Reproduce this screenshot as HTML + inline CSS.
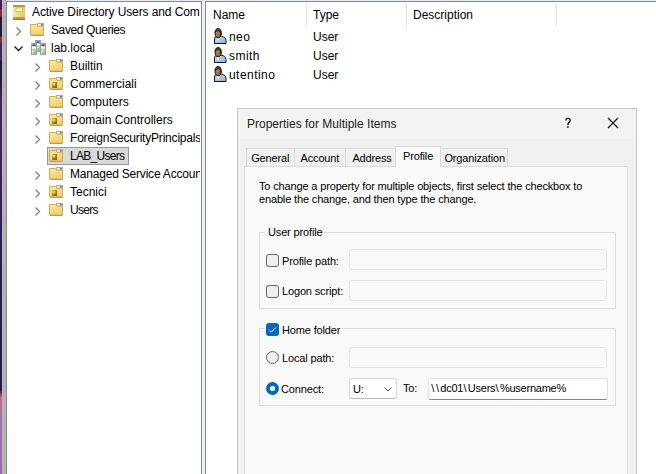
<!DOCTYPE html>
<html><head><meta charset="utf-8">
<style>
*{margin:0;padding:0;box-sizing:border-box}
html,body{width:656px;height:474px;overflow:hidden;background:#fff;position:relative;font-family:"Liberation Sans",sans-serif;color:#000}
.a{position:absolute}
.t{position:absolute;white-space:nowrap;font-size:12px;line-height:12px}
.s{position:absolute;white-space:nowrap;font-size:11px;line-height:11px;letter-spacing:-0.15px}
svg{position:absolute;overflow:visible}
</style></head><body>
<svg width="0" height="0" style="position:absolute">
<defs>
<linearGradient id="fg" x1="0" y1="0" x2="0.3" y2="1"><stop offset="0" stop-color="#fbe8a6"/><stop offset="1" stop-color="#f3d06e"/></linearGradient>
<linearGradient id="oug" x1="0" y1="0" x2="1" y2="1"><stop offset="0" stop-color="#d8c070"/><stop offset="0.5" stop-color="#a08018"/><stop offset="1" stop-color="#7a5e08"/></linearGradient>
<symbol id="fold" viewBox="0 0 16 16">
<path d="M0.5 2.5h6l1.5 1.5h5.5v9h-13z" fill="url(#fg)" stroke="#d0ab58"/>
<rect x="7.5" y="1.5" width="6" height="2.5" fill="#f6e4a8" stroke="#d0ab58"/>
<rect x="8.5" y="2" width="2.5" height="1.5" fill="#fff"/>
<rect x="10.8" y="2" width="2" height="1.5" fill="#3a7ee0"/>
<path d="M1 13.5h12.5" stroke="#c09a48"/>
</symbol>
<symbol id="ou" viewBox="0 0 16 16">
<use href="#fold"/>
<rect x="3" y="6" width="5" height="6" fill="url(#oug)"/>
<rect x="3.8" y="7" width="2.5" height="2.5" fill="#f0e4a0" opacity="0.8"/>
</symbol>
<symbol id="chev" viewBox="0 0 8 10">
<path d="M1.5 1.5l4 4l-4 4" fill="none" stroke="#808080" stroke-width="1.25"/>
</symbol>
<symbol id="user" viewBox="0 0 14 17">
<linearGradient id="ug" x1="0" y1="0" x2="1" y2="1"><stop offset="0" stop-color="#c8dcf4"/><stop offset="1" stop-color="#8cb2e0"/></linearGradient>
<linearGradient id="fcg" x1="0" y1="0" x2="1" y2="1"><stop offset="0" stop-color="#d09a68"/><stop offset="1" stop-color="#8a5020"/></linearGradient>
<path d="M1.5 15.5V11c0-1.6 1-2.6 2.5-2.6h4.5c2.6 0 4.5 1.6 4.5 4.2v2.9z" fill="url(#ug)" stroke="#111"/>
<path d="M3.6 9l1.6 4.8l1.4-4.8z" fill="#fff"/>
<ellipse cx="5.1" cy="5.3" rx="3.0" ry="4.5" fill="url(#fcg)" stroke="#111"/>
<path d="M2.1 4.4C2.1 1.6 3.4 0.7 5.1 0.7S8.1 1.6 8.1 4.4L8.1 7.2C7.8 5.2 7.6 3.3 6.2 2.9C4.9 2.6 3.2 3 2.2 4.6z" fill="#4a4a4a" stroke="#111" stroke-width="0.7"/>
</symbol>
</defs>
</svg>

<!-- window chrome -->
<div class="a" style="left:0;top:0;width:2px;height:474px;background:linear-gradient(#4a1a60 0,#4a1a60 9px,#8a2a40 10px,#8a2a40 16px,#1e1a3e 17px,#1e1a3e 36px,#8a2a40 37px,#8a2a40 42px,#4a1e62 43px,#4a1e62 60px,#1c1838 61px,#1c1838 80px,#4a2060 100px,#3a1e5a 200px,#2a1e4a 240px,#221c44 390px,#c86a8a 398px,#a070a8 420px,#9a6aa8 474px)"></div>
<div class="a" style="left:2px;top:0;width:4px;height:474px;background:#b2b2b2"></div>
<div class="a" style="left:2px;top:0;width:1px;height:474px;background:#bababa"></div>
<div class="a" style="left:6px;top:0;width:650px;height:1px;background:#dfeaf8"></div>
<div class="a" style="left:6px;top:1px;width:650px;height:1px;background:#858a93"></div>
<div class="a" style="left:6px;top:1px;width:1px;height:473px;background:#858a93"></div>
<div class="a" style="left:201px;top:1px;width:1px;height:473px;background:#858a93"></div>
<div class="a" style="left:202px;top:1px;width:3px;height:473px;background:#f0f0f0"></div>
<div class="a" style="left:205px;top:1px;width:1px;height:473px;background:#858a93"></div>

<!-- tree pane -->
<div class="a" style="left:7px;top:0px;width:193px;height:474px;overflow:hidden">
<svg style="left:6px;top:5px" width="12" height="15" viewBox="0 0 12 15"><defs><linearGradient id="bk" x1="0" x2="1"><stop offset="0" stop-color="#f6e9a8"/><stop offset="1" stop-color="#e6c860"/></linearGradient></defs><rect x="0" y="0" width="12" height="15" fill="url(#bk)"/><rect x="0" y="0" width="12" height="2" fill="#b89838"/><rect x="0" y="12" width="12" height="3" fill="#b8a050"/><rect x="0" y="14" width="12" height="1" fill="#9a7a20"/><rect x="3" y="3" width="6.5" height="3.5" fill="#fffbe0" stroke="#d8bc60"/></svg>
<div class="t" style="left:25px;top:6px;letter-spacing:-0.1px">Active Directory Users and Computers [dc01.lab.local]</div>
<svg style="left:7.5px;top:26px" width="8" height="10" viewBox="0 0 8 10"><use href="#chev"/></svg>
<svg style="left:23px;top:22px" width="16" height="16" viewBox="0 0 16 16"><use href="#fold"/></svg>
<div class="t" style="left:44px;top:24px;letter-spacing:-0.4px">Saved Queries</div>
<svg style="left:6px;top:45px" width="10" height="8" viewBox="0 0 10 8"><path d="M1.5 1.5l4 4l4-4" fill="none" stroke="#1a1a1a" stroke-width="1.3"/></svg>
<svg style="left:24px;top:40px" width="16" height="16" viewBox="0 0 16 16"><defs><linearGradient id="svg_g" x1="0" x2="1"><stop offset="0" stop-color="#e4e7ea"/><stop offset="1" stop-color="#bcc2c8"/></linearGradient><linearGradient id="led" x1="0" y1="0" x2="1" y2="1"><stop offset="0" stop-color="#c8f040"/><stop offset="1" stop-color="#18c020"/></linearGradient></defs><rect x="4.5" y="0.5" width="5" height="11" fill="url(#svg_g)" stroke="#98a0a8"/><rect x="5.2" y="1.4" width="3.6" height="1.4" rx="0.6" fill="#1e3444"/><rect x="5" y="4" width="4" height="1.6" fill="#f6f8fa"/><rect x="5" y="6.2" width="4" height="0.8" fill="#b8bec6"/><rect x="6.3" y="8.3" width="2.2" height="2.2" fill="url(#led)"/><rect x="0.5" y="3.5" width="5" height="11" fill="url(#svg_g)" stroke="#98a0a8"/><rect x="1.2" y="4.4" width="3.6" height="1.4" rx="0.6" fill="#1e3444"/><rect x="1" y="7" width="4" height="1.6" fill="#f6f8fa"/><rect x="1" y="9.2" width="4" height="0.8" fill="#b8bec6"/><rect x="2.3" y="11.3" width="2.2" height="2.2" fill="url(#led)"/><rect x="9.5" y="3.5" width="5" height="11" fill="url(#svg_g)" stroke="#98a0a8"/><rect x="10.2" y="4.4" width="3.6" height="1.4" rx="0.6" fill="#1e3444"/><rect x="10" y="7" width="4" height="1.6" fill="#f6f8fa"/><rect x="10" y="9.2" width="4" height="0.8" fill="#b8bec6"/><rect x="11.3" y="11.3" width="2.2" height="2.2" fill="url(#led)"/></svg>
<div class="t" style="left:44px;top:42px">lab.local</div>
<svg style="left:27px;top:62px" width="8" height="10" viewBox="0 0 8 10"><use href="#chev"/></svg>
<svg style="left:42px;top:58px" width="16" height="16" viewBox="0 0 16 16"><use href="#fold"/></svg>
<div class="t" style="left:63px;top:60px">Builtin</div>
<svg style="left:27px;top:80px" width="8" height="10" viewBox="0 0 8 10"><use href="#chev"/></svg>
<svg style="left:42px;top:76px" width="16" height="16" viewBox="0 0 16 16"><use href="#ou"/></svg>
<div class="t" style="left:63px;top:78px">Commerciali</div>
<svg style="left:27px;top:98px" width="8" height="10" viewBox="0 0 8 10"><use href="#chev"/></svg>
<svg style="left:42px;top:94px" width="16" height="16" viewBox="0 0 16 16"><use href="#fold"/></svg>
<div class="t" style="left:63px;top:96px">Computers</div>
<svg style="left:27px;top:116px" width="8" height="10" viewBox="0 0 8 10"><use href="#chev"/></svg>
<svg style="left:42px;top:112px" width="16" height="16" viewBox="0 0 16 16"><use href="#ou"/></svg>
<div class="t" style="left:63px;top:114px">Domain Controllers</div>
<svg style="left:27px;top:134px" width="8" height="10" viewBox="0 0 8 10"><use href="#chev"/></svg>
<svg style="left:42px;top:130px" width="16" height="16" viewBox="0 0 16 16"><use href="#fold"/></svg>
<div class="t" style="left:63px;top:132px;letter-spacing:-0.2px">ForeignSecurityPrincipals</div>
<div class="a" style="left:40px;top:147px;width:82px;height:18px;background:#d9d9d9;border:1px solid #999"></div>
<svg style="left:42px;top:148px" width="16" height="16" viewBox="0 0 16 16"><use href="#ou"/></svg>
<div class="t" style="left:63px;top:150px;letter-spacing:-0.7px">LAB_Users</div>
<svg style="left:27px;top:170px" width="8" height="10" viewBox="0 0 8 10"><use href="#chev"/></svg>
<svg style="left:42px;top:166px" width="16" height="16" viewBox="0 0 16 16"><use href="#fold"/></svg>
<div class="t" style="left:63px;top:168px;letter-spacing:-0.2px">Managed Service Accounts</div>
<svg style="left:27px;top:188px" width="8" height="10" viewBox="0 0 8 10"><use href="#chev"/></svg>
<svg style="left:42px;top:184px" width="16" height="16" viewBox="0 0 16 16"><use href="#ou"/></svg>
<div class="t" style="left:63px;top:186px">Tecnici</div>
<svg style="left:27px;top:206px" width="8" height="10" viewBox="0 0 8 10"><use href="#chev"/></svg>
<svg style="left:42px;top:202px" width="16" height="16" viewBox="0 0 16 16"><use href="#fold"/></svg>
<div class="t" style="left:63px;top:204px;letter-spacing:-0.7px">Users</div>
</div>

<!-- list pane -->
<div class="a" style="left:206px;top:2px;width:450px;height:472px;overflow:hidden">
<div class="t" style="left:7px;top:7px">Name</div>
<div class="t" style="left:107px;top:7px">Type</div>
<div class="t" style="left:207px;top:7px">Description</div>
<div class="a" style="left:100px;top:1px;width:1px;height:24px;background:#e5e5e5"></div>
<div class="a" style="left:200px;top:1px;width:1px;height:24px;background:#e5e5e5"></div>
<div class="a" style="left:350px;top:1px;width:1px;height:24px;background:#e5e5e5"></div>
<svg style="left:7px;top:26px" width="14" height="17" viewBox="0 0 14 17"><use href="#user"/></svg>
<div class="t" style="left:23px;top:29px;letter-spacing:0.45px">neo</div>
<div class="t" style="left:107px;top:29px">User</div>
<svg style="left:7px;top:45px" width="14" height="17" viewBox="0 0 14 17"><use href="#user"/></svg>
<div class="t" style="left:23px;top:48px;letter-spacing:0.45px">smith</div>
<div class="t" style="left:107px;top:48px">User</div>
<svg style="left:7px;top:64px" width="14" height="17" viewBox="0 0 14 17"><use href="#user"/></svg>
<div class="t" style="left:23px;top:67px;letter-spacing:0.45px">utentino</div>
<div class="t" style="left:107px;top:67px">User</div>
</div>

<!-- dialog -->
<div class="a" style="left:237px;top:108px;width:400px;height:366px;background:#f0f0f0;border:1px solid #c4c4c4;border-bottom:none">
<div class="a" style="left:0;top:0;width:398px;height:30px;background:#f3f3f3"></div>
<div class="a" style="left:0;top:0;width:1px;height:366px;background:#f6f6f6"></div>
<div class="t" style="left:9px;top:9px;color:#1a1a1a">Properties for Multiple Items</div>
<svg style="left:326px;top:8px" width="8" height="12" viewBox="0 0 8 12"><path d="M1.9 3.4C1.9 2 2.8 1.3 4 1.3S6.2 2 6.2 3.3C6.2 4.6 5.2 5 4.5 5.8C4 6.3 3.9 6.8 3.9 8.2" fill="none" stroke="#111" stroke-width="1.35"/><circle cx="3.9" cy="10.1" r="0.9" fill="#111"/></svg>
<svg style="left:369px;top:8px" width="12" height="12" viewBox="0 0 12 12"><path d="M1 1L11 11M11 1L1 11" stroke="#111" stroke-width="1.2"/></svg>
<div class="a" style="left:8px;top:39px;width:49px;height:19px;background:#f0f0f0;border:1px solid #d9d9d9;border-bottom:none"></div>
<div class="a" style="left:56px;top:39px;width:52px;height:19px;background:#f0f0f0;border:1px solid #d9d9d9;border-bottom:none"></div>
<div class="a" style="left:107px;top:39px;width:51px;height:19px;background:#f0f0f0;border:1px solid #d9d9d9;border-bottom:none"></div>
<div class="a" style="left:202px;top:39px;width:68px;height:19px;background:#f0f0f0;border:1px solid #d9d9d9;border-bottom:none"></div>
<div class="s" style="left:13.2px;top:44px">General</div>
<div class="s" style="left:62.5px;top:44px">Account</div>
<div class="s" style="left:114.4px;top:44px">Address</div>
<div class="s" style="left:206.4px;top:44px">Organization</div>
<div class="a" style="left:6px;top:57px;width:384px;height:320px;background:#f9f9f9;border:1px solid #dcdcdc"></div>
<div class="a" style="left:390px;top:58px;width:1px;height:320px;background:#f5f5f5"></div>
<div class="a" style="left:397px;top:0px;width:1px;height:366px;background:#f5f5f5"></div>
<div class="a" style="left:157px;top:37px;width:46px;height:21px;background:#f9f9f9;border:1px solid #d9d9d9;border-bottom:none"></div>
<div class="s" style="left:165px;top:42px">Profile</div>
<div class="s" style="left:21px;top:72px">To change a property for multiple objects, first select the checkbox to</div>
<div class="s" style="left:21px;top:85px">enable the change, and then type the change.</div>
<div class="a" style="left:21px;top:123px;width:357px;height:77px;border:1px solid #dcdcdc"></div>
<div class="a" style="left:27px;top:117px;width:58px;height:12px;background:#f9f9f9"></div>
<div class="s" style="left:30px;top:118px">User profile</div>
<svg style="left:28px;top:145px" width="13" height="13" viewBox="0 0 13 13"><rect x="0.5" y="0.5" width="12" height="12" rx="2.5" fill="#f0f0f0" stroke="#666"/></svg>
<div class="s" style="left:44px;top:147px">Profile path:</div>
<div class="a" style="left:111px;top:140px;width:258px;height:21px;background:#f9f9f9;border:1px solid #e6e6e6;border-radius:3px"></div>
<svg style="left:28px;top:176px" width="13" height="13" viewBox="0 0 13 13"><rect x="0.5" y="0.5" width="12" height="12" rx="2.5" fill="#f0f0f0" stroke="#666"/></svg>
<div class="s" style="left:44px;top:177px">Logon script:</div>
<div class="a" style="left:111px;top:171px;width:258px;height:21px;background:#f9f9f9;border:1px solid #e6e6e6;border-radius:3px"></div>
<div class="a" style="left:21px;top:219px;width:357px;height:78px;border:1px solid #dcdcdc"></div>
<div class="a" style="left:26px;top:211px;width:78px;height:17px;background:#f9f9f9"></div>
<svg style="left:28px;top:214px" width="13" height="13" viewBox="0 0 13 13"><rect x="0" y="0" width="13" height="13" rx="3" fill="#0067c0"/><path d="M3 6.8l2.3 2.3l4.7-4.7" fill="none" stroke="#fff" stroke-width="1"/></svg>
<div class="s" style="left:44px;top:216px">Home folder</div>
<svg style="left:28px;top:242px" width="13" height="13" viewBox="0 0 13 13"><circle cx="6.5" cy="6.5" r="6" fill="#f0f0f0" stroke="#666"/></svg>
<div class="s" style="left:44px;top:244px">Local path:</div>
<div class="a" style="left:111px;top:238px;width:258px;height:21px;background:#f9f9f9;border:1px solid #e6e6e6;border-radius:3px"></div>
<svg style="left:28px;top:273px" width="13" height="13" viewBox="0 0 13 13"><circle cx="6.5" cy="6.5" r="6.5" fill="#0067c0"/><circle cx="6.5" cy="6.5" r="2.6" fill="#fff"/></svg>
<div class="s" style="left:43px;top:275px">Connect:</div>
<div class="a" style="left:111px;top:269px;width:48px;height:21px;background:#fff;border:1px solid #d6d6d6;border-bottom:1px solid #b8b8b8;border-radius:3px"></div>
<div class="s" style="left:115px;top:275px">U:</div>
<svg style="left:145px;top:276.5px" width="10" height="8" viewBox="0 0 10 8"><path d="M1.5 1.5l3.5 3.5l3.5-3.5" fill="none" stroke="#444" stroke-width="1"/></svg>
<div class="s" style="left:165px;top:274px">To:</div>
<div class="a" style="left:190px;top:269px;width:180px;height:22px;background:#fff;border:1px solid #e0e0e0;border-bottom:1px solid #868686;border-radius:3px"></div>
<div class="s" style="left:193px;top:274px;letter-spacing:-0.25px"><span style="letter-spacing:1.3px;margin-left:0.3px">\</span><span style="letter-spacing:1.3px;margin-left:0.3px">\</span>dc01<span style="letter-spacing:1.3px;margin-left:0.3px">\</span>Users<span style="letter-spacing:1.3px;margin-left:0.3px">\</span>%username%</div>
</div>
</body></html>
